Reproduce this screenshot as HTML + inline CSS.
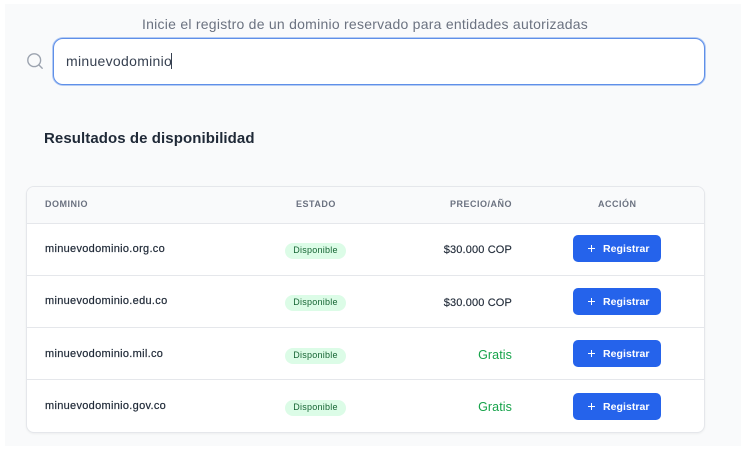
<!DOCTYPE html>
<html><head><meta charset="utf-8">
<style>
html,body{margin:0;padding:0;background:#fff}
body{width:746px;height:460px;position:relative;overflow:hidden;font-family:"Liberation Sans",sans-serif;color:#1f2937}
div,span{position:absolute;white-space:nowrap;box-sizing:border-box}
#bg{left:5px;top:4px;width:736px;height:442px;background:#f9fafb}
#sub{left:142px;top:16px;font-size:14px;line-height:16px;color:#6b7280;letter-spacing:.25px}
#inp{left:53px;top:38px;width:652px;height:47px;background:#fff;border:1.5px solid #5f8fe8;border-radius:10px;box-shadow:0 0 0 1px #b4ccf4}
#val{left:66px;top:53px;font-size:14px;line-height:16px;color:#374151;letter-spacing:.3px}
#caret{left:171px;top:53px;width:1px;height:16px;background:#374151}
#h{left:44px;top:130px;font-size:15px;line-height:18px;font-weight:700;color:#1f2937;letter-spacing:.08px}
#card{left:26px;top:186px;width:679px;height:247px;background:#fff;border:1px solid #e5e7eb;border-radius:8px;box-shadow:0 1px 2px rgba(0,0,0,.05);overflow:hidden}
#head{left:0;top:0;width:677px;height:37px;background:#f9fafb;border-bottom:1px solid #e5e7eb}
.l{left:0;width:677px;height:1px;background:#e5e7eb}
.th{font-size:9px;line-height:12px;font-weight:700;letter-spacing:.5px;color:#6b7280;top:198px}
.d{left:45px;font-size:11px;line-height:14px;color:#1f2937;letter-spacing:.3px;-webkit-text-stroke:.2px #1f2937}
.b{left:285px;width:61px;height:16px;border-radius:8px;background:#dcfce7;color:#166534;font-size:9px;line-height:15px;text-align:center;letter-spacing:.25px}
.p{right:234px;font-size:11px;line-height:14px;color:#1f2937;letter-spacing:.15px;-webkit-text-stroke:.15px #1f2937}
.g{right:234px;font-size:12.5px;line-height:14px;color:#16a34a;letter-spacing:.1px}
.btn{left:573px;width:88px;height:27px;background:#2563eb;border-radius:5px}
.btn svg{position:absolute;left:14px;top:9px}
.btn span{left:30px;top:6.5px;font-size:10.5px;line-height:14px;font-weight:700;color:#fff;letter-spacing:.05px}
</style></head><body>
<div id="bg"></div>
<div id="sub">Inicie el registro de un dominio reservado para entidades autorizadas</div>
<svg style="position:absolute;left:26px;top:52px" width="18" height="18" viewBox="0 0 18 18" fill="none" stroke="#9ca3af" stroke-width="1.4" stroke-linecap="round"><circle cx="8.2" cy="8.2" r="6.4"/><path d="M13 13l3.2 3.2"/></svg>
<div id="inp"></div>
<div id="val">minuevodominio</div>
<div id="caret"></div>
<div id="h">Resultados de disponibilidad</div>
<div id="card">
<div id="head"></div>
<div class="l" style="top:88px"></div>
<div class="l" style="top:140px"></div>
<div class="l" style="top:192px"></div>
</div>
<div class="th" style="left:45px">DOMINIO</div>
<div class="th" style="left:296px">ESTADO</div>
<div class="th" style="right:234px">PRECIO/AÑO</div>
<div class="th" style="left:598px">ACCIÓN</div>

<div class="d" style="top:242px">minuevodominio.org.co</div>
<div class="b" style="top:243px">Disponible</div>
<div class="p" style="top:243px">$30.000 COP</div>
<div class="btn" style="top:235px"><svg width="9" height="9" viewBox="0 0 9 9" stroke="#fff" stroke-width="1"><path d="M4.5 1v7M1 4.5h7"/></svg><span>Registrar</span></div>

<div class="d" style="top:294px">minuevodominio.edu.co</div>
<div class="b" style="top:295px">Disponible</div>
<div class="p" style="top:296px">$30.000 COP</div>
<div class="btn" style="top:288px"><svg width="9" height="9" viewBox="0 0 9 9" stroke="#fff" stroke-width="1"><path d="M4.5 1v7M1 4.5h7"/></svg><span>Registrar</span></div>

<div class="d" style="top:347px">minuevodominio.mil.co</div>
<div class="b" style="top:348px">Disponible</div>
<div class="g" style="top:348px">Gratis</div>
<div class="btn" style="top:340px"><svg width="9" height="9" viewBox="0 0 9 9" stroke="#fff" stroke-width="1"><path d="M4.5 1v7M1 4.5h7"/></svg><span>Registrar</span></div>

<div class="d" style="top:399px">minuevodominio.gov.co</div>
<div class="b" style="top:400px">Disponible</div>
<div class="g" style="top:400px">Gratis</div>
<div class="btn" style="top:393px"><svg width="9" height="9" viewBox="0 0 9 9" stroke="#fff" stroke-width="1"><path d="M4.5 1v7M1 4.5h7"/></svg><span>Registrar</span></div>
</body></html>
